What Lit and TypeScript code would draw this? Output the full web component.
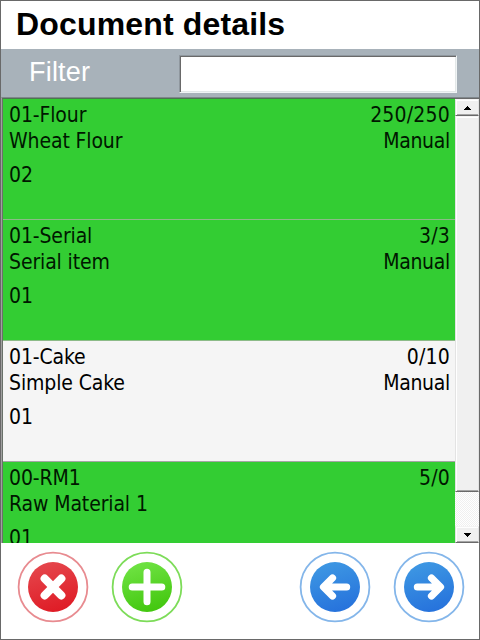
import { LitElement, html, css, svg } from "lit";
import { customElement, property } from "lit/decorators.js";
import { classMap } from "lit/directives/class-map.js";

interface Item {
  code: string;
  name: string;
  place: string;
  quantity: string;
  mode: string;
  done: boolean;
}

const items: Item[] = [
  { code: "01-Flour", name: "Wheat Flour", place: "02", quantity: "250/250", mode: "Manual", done: true },
  { code: "01-Serial", name: "Serial item", place: "01", quantity: "3/3", mode: "Manual", done: true },
  { code: "01-Cake", name: "Simple Cake", place: "01", quantity: "0/10", mode: "Manual", done: false },
  { code: "00-RM1", name: "Raw Material 1", place: "01", quantity: "5/0", mode: "", done: true },
];

@customElement("item-row")
class ItemRow extends LitElement {
  @property({ attribute: false }) item!: Item;

  static styles = css`
    :host { display: block; flex: none; }
    .row {
      box-sizing: border-box;
      height: 121px;
      padding: 3px 5px 0 6px;
      border-bottom: 1px solid #8cbb88;
      background: #f5f5f5;
      font: 21px/26px "DejaVu Sans Condensed", "DejaVu Sans", sans-serif;
      font-stretch: condensed;
      letter-spacing: -0.12px;
      color: #000;
    }
    .done { background: #33cd33; color: #001800; }
    .open { border-bottom-color: #a5a5a5; }
    .line { display: flex; justify-content: space-between; height: 26px; white-space: pre; }
    .quantity { letter-spacing: 0.2px; }
    .mode { letter-spacing: -0.3px; }
    .place { margin-top: 8px; }
  `;

  render() {
    const i = this.item;
    return html`<div class=${classMap({ row: true, done: i.done, open: !i.done })}>
      <div class="line"><span>${i.code}</span><span class="quantity">${i.quantity}</span></div>
      <div class="line"><span>${i.name}</span><span class="mode">${i.mode}</span></div>
      <div class="line place"><span>${i.place}</span></div>
    </div>`;
  }
}

const glyphs = {
  cancel: svg`<path d="M-8.300 -8.300L8.300 8.300M8.300 -8.300L-8.300 8.300" stroke-width="8.200"/>`,
  add: svg`<path d="M0 -14.800V14.800M-14.800 0H14.800" stroke-width="7"/>`,
  back: svg`<path d="M11.600 0H-10M-2.500 -9L-11.500 0L-2.500 9" stroke-width="7.200"/>`,
  next: svg`<path d="M-11.600 0H10M2.500 -9L11.500 0L2.500 9" stroke-width="7.200"/>`,
};

const tones = {
  cancel: { ring: "#e88b90", from: "#e5474d", to: "#df1b25" },
  add: { ring: "#7ddc59", from: "#70e344", to: "#42c70e" },
  back: { ring: "#84b6ea", from: "#3e98e3", to: "#2672dc" },
  next: { ring: "#84b6ea", from: "#3e98e3", to: "#2672dc" },
};

@customElement("round-button")
class RoundButton extends LitElement {
  @property() kind: keyof typeof glyphs = "add";

  static styles = css`
    :host { display: block; width: 72px; height: 72px; }
    .icon { display: block; }
  `;

  render() {
    const t = tones[this.kind];
    return html`<svg class="icon" width="72" height="72" viewBox="-36 -36 72 72" fill="none">
      <defs><linearGradient id="tone" x1=".3" y1="0" x2=".6" y2="1">
        <stop offset="0" stop-color=${t.from}></stop><stop offset="1" stop-color=${t.to}></stop>
      </linearGradient></defs>
      <circle r="34.4" stroke=${t.ring} stroke-width="1.8"></circle>
      <circle r="25" fill="url(#tone)"></circle>
      <g stroke="#fff" stroke-linecap="round" stroke-linejoin="round">${glyphs[this.kind]}</g>
    </svg>`;
  }
}

@customElement("app-root")
class AppRoot extends LitElement {
  static styles = css`
    :host {
      display: flex;
      flex-direction: column;
      box-sizing: border-box;
      width: 480px;
      height: 640px;
      border: 1px solid #696969;
      background: #fff;
      overflow: hidden;
      font-family: "Liberation Sans", Arial, sans-serif;
    }
    .title {
      height: 48px;
      margin: 0;
      padding-left: 15px;
      font-size: 32px;
      line-height: 46px;
      font-weight: bold;
      letter-spacing: 0.16px;
      white-space: nowrap;
    }
    .filter {
      display: flex;
      align-items: flex-start;
      box-sizing: border-box;
      height: 48px;
      padding: 6px 0 0 28px;
      background: #a8b2ba;
    }
    .label { width: 150px; color: #fff; font-size: 27px; line-height: 35px; letter-spacing: 0.2px; }
    .field {
      box-sizing: border-box;
      width: 278px;
      height: 38px;
      border: 1px solid;
      border-color: #8f979e #f0f4f5 #f0f4f5 #8f979e;
      padding: 0;
      background: #fff;
      box-shadow: inset 1px 1px #696969, inset -1px -1px #e3e8e8;
    }
    .list {
      display: flex;
      box-sizing: border-box;
      height: 446px;
      border-top: 1px solid #7f868b;
      border-left: 1px solid #a0a0a0;
    }
    .rows {
      display: flex;
      flex-direction: column;
      box-sizing: border-box;
      width: 453px;
      height: 445px;
      overflow: hidden;
      border-left: 1px solid #697169;
      border-top: 1px solid #4c7550;
    }
    .scroll {
      display: flex;
      flex-direction: column;
      width: 24px;
      height: 444px;
      border-top: 1px solid #696969;
      background: repeating-conic-gradient(#fff 0 25%, #f0f0f0 0 50%) 0 0 / 2px 2px;
    }
    .arrow, .thumb {
      box-sizing: border-box;
      display: flex;
      align-items: center;
      justify-content: center;
      background: #f0f0f0;
      border: 1px solid;
      border-color: #f4f4f4 #e3e3e3 #696969 #e3e3e3;
      box-shadow: inset 1px 1px #fff, inset 0 -1px #a5a5a5;
    }
    .arrow { height: 17px; }
    .thumb { height: 376px; }
    .down { margin-top: auto; }
    .bar {
      display: flex;
      padding: 8px 14px 0 16px;
    }
    .add { margin-left: 22px; }
    .back { margin-left: auto; }
    .next { margin-left: 22px; }
  `;

  render() {
    return html`
      <h1 class="title">Document details</h1>
      <div class="filter"><span class="label">Filter</span><input class="field" aria-label="Filter" /></div>
      <div class="list">
        <div class="rows">${items.map((i) => html`<item-row .item=${i}></item-row>`)}</div>
        <div class="scroll">
          <div class="arrow"><svg width="7" height="4" shape-rendering="crispEdges"><path d="M3 0h1v1h1v1h1v1h1v1H0V3h1V2h1V1h1z" /></svg></div>
          <div class="thumb"></div>
          <div class="arrow down"><svg width="7" height="4" shape-rendering="crispEdges"><path d="M0 0h7v1H6v1H5v1H4v1H3V3H2V2H1V1H0z" /></svg></div>
        </div>
      </div>
      <div class="bar">
        <round-button kind="cancel"></round-button>
        <round-button class="add" kind="add"></round-button>
        <round-button class="back" kind="back"></round-button>
        <round-button class="next" kind="next"></round-button>
      </div>
    `;
  }
}
